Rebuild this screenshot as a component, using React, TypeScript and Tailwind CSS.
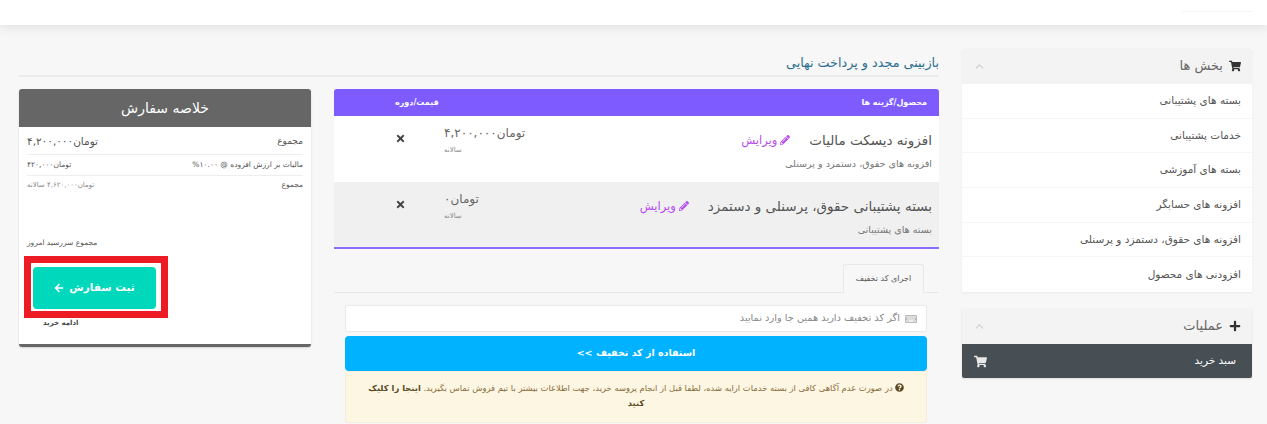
import { ChevronUp } from "lucide-react";
import {
  FaArrowLeft,
  FaKeyboard,
  FaPencilAlt,
  FaPlus,
  FaQuestionCircle,
  FaShoppingCart,
  FaTimes,
} from "react-icons/fa";

const menuItems = [
  "بسته های پشتیبانی",
  "خدمات پشتیبانی",
  "بسته های آموزشی",
  "افزونه های حسابگر",
  "افزونه های حقوق، دستمزد و پرسنلی",
  "افزودنی های محصول",
];

const cartRows = [
  {
    name: "افزونه دیسکت مالیات",
    group: "افزونه های حقوق، دستمزد و پرسنلی",
    price: "تومان۴,۲۰۰,۰۰۰",
    bg: "bg-white",
  },
  {
    name: "بسته پشتیبانی حقوق، پرسنلی و دستمزد",
    group: "بسته های پشتیبانی",
    price: "تومان۰",
    bg: "bg-[#f0f0f0]",
  },
];

function PanelHeading({ icon, title }: { icon: React.ReactNode; title: string }) {
  return (
    <div className="flex h-[36px] items-center justify-between rounded-t-[3px] bg-[#f3f3f3] pl-[11px] pr-[11px]">
      <div className="flex items-center gap-[6px] text-[13px] text-[#666]">
        <span className="text-[12px] text-[#333]">{icon}</span>
        <span>{title}</span>
      </div>
      <ChevronUp size={13} className="text-[#ccc]" />
    </div>
  );
}

function Sidebar() {
  return (
    <aside className="ml-[23px] w-[290px] shrink-0 pt-[23px]">
      <div className="bg-white shadow-[0_1px_2px_rgba(0,0,0,0.06)]">
        <PanelHeading icon={<FaShoppingCart />} title="بخش ها" />
        {menuItems.map((item) => (
          <div
            key={item}
            className="flex h-[34.7px] items-center border-b border-[#f5f5f5] px-[11px] text-[10.5px] text-[#555] last:border-b-0"
          >
            {item}
          </div>
        ))}
      </div>
      <div className="mt-[16px] shadow-[0_1px_2px_rgba(0,0,0,0.1)]">
        <PanelHeading icon={<FaPlus />} title="عملیات" />
        <div className="flex h-[34px] items-center justify-between rounded-b-[2px] bg-[#474f54] pl-[12px] pr-[16px] text-[10.5px] text-white">
          <span>سبد خرید</span>
          <FaShoppingCart size={13} className="text-[#e8e8e8]" />
        </div>
      </div>
    </aside>
  );
}

function OrderSummary() {
  return (
    <div className="h-[258px] w-[292px] shrink-0 self-start rounded-[3px] border-b-[3px] border-[#666] bg-white shadow-[0_1px_2px_rgba(0,0,0,0.15)]">
      <div className="flex h-[38px] items-center justify-center rounded-t-[3px] bg-[#666] text-[14px] text-white">
        خلاصه سفارش
      </div>
      <div className="px-[8px] text-[#555]">
        <div className="flex h-[28px] items-center justify-between border-b border-[#eee] pt-[2px] text-[9px]">
          <span>مجموع</span>
          <span className="text-[10.5px]">تومان۴,۲۰۰,۰۰۰</span>
        </div>
        <div className="flex h-[21px] items-center justify-between border-b border-[#eee] text-[7.5px]">
          <span>مالیات بر ارزش افزوده @ ۱۰.۰۰%</span>
          <span>تومان۴۲۰,۰۰۰</span>
        </div>
        <div className="flex h-[18px] items-center justify-between text-[7.5px]">
          <span>مجموع</span>
          <span className="text-[7px] text-[#888]">تومان۴,۶۲۰,۰۰۰ سالانه</span>
        </div>
        <div dir="ltr" className="mt-[43px] text-left text-[7.5px] leading-[12px]">
          <span dir="rtl">مجموع سررسید امروز</span>
        </div>
      </div>
      <div className="ml-[5px] mr-auto mt-[7px] w-[144px] border-[7px] border-[#ed1c24]">
        <div className="bg-white pb-[2px] pl-[2px] pr-[5px] pt-[4px]">
          <button className="flex h-[42px] w-full items-center justify-center gap-[5px] rounded-[4px] bg-[#00d8bb] text-[10.5px] font-bold text-white">
            <span>ثبت سفارش</span>
            <FaArrowLeft size={10} />
          </button>
        </div>
      </div>
      <div dir="ltr" className="ml-[24px] mt-[-1px] text-[7px] font-bold leading-[12px] text-[#444]">
        <span dir="rtl">ادامه خرید</span>
      </div>
    </div>
  );
}

function CartTable() {
  return (
    <div>
      <div className="flex h-[27px] items-center justify-between rounded-t-[3px] bg-[#7d5bff] px-[12px] text-[8px] font-bold text-white">
        <span>محصول/گزینه ها</span>
        <span className="ml-[49px]">قیمت/دوره</span>
      </div>
      <div className="border-b-2 border-[#8b6cff]">
        {cartRows.map((row) => (
          <div key={row.name} className={`flex h-[65.5px] items-start ${row.bg}`}>
            <div className="flex-1 pr-[7px] pt-[14px]">
              <div className="flex items-center gap-[19px] text-[13.5px] leading-[20px] text-[#555]">
                <span>{row.name}</span>
                <span className="flex items-center gap-[3px] text-[11.5px] text-[#b44cf0]">
                  <FaPencilAlt size={10} />
                  ویرایش
                </span>
              </div>
              <div className="mt-[8px] text-[9.6px] leading-[12px] text-[#777]">{row.group}</div>
            </div>
            <div className="flex w-[90px] shrink-0 flex-col items-end pt-[8px]">
              <span className="text-[12px] leading-[18px] text-[#666]">{row.price}</span>
              <span className="mt-[3px] text-[7px] leading-[10px] text-[#888]">سالانه</span>
            </div>
            <div className="w-[110px] shrink-0 pr-[38px] pt-[17px]">
              <FaTimes size={11} className="text-[#444]" />
            </div>
          </div>
        ))}
      </div>
    </div>
  );
}

function PromoBox() {
  return (
    <div>
      <div className="mt-[15px] flex h-[29px] items-end border-b border-[#e9e9e9] pr-[15px]">
        <div className="mb-[-1px] flex h-[29px] w-[81px] items-center justify-center rounded-t-[3px] border border-b-0 border-[#e9e9e9] bg-[#f7f7f7] text-[8px] text-[#555]">
          اجرای کد تخفیف
        </div>
      </div>
      <div className="pl-[11px] pr-[12px] pt-[12px]">
        <div className="flex h-[27px] items-center gap-[5px] rounded-[2px] border border-[#eaeaea] bg-white px-[9px] text-[9.8px] text-[#888]">
          <FaKeyboard size={12} className="text-[#bbb]" />
          اگر کد تخفیف دارید همین جا وارد نمایید
        </div>
        <button className="mt-[4px] flex h-[35px] w-full items-center justify-center rounded-[4px] bg-[#00b2ff] text-[9.5px] font-bold text-white">
          استفاده از کد تخفیف &gt;&gt;
        </button>
        <div className="h-[52px] rounded-b-[3px] border border-[#f5eed8] bg-[#fcf6e3] px-[16px] pt-[9px] text-center text-[8.4px] leading-[15px] text-[#8a6d3b]">
          <FaQuestionCircle size={9} className="ml-[2px] inline align-[-1px] text-[#5c4a24]" />
          در صورت عدم آگاهی کافی از بسته خدمات ارایه شده، لطفا قبل از انجام پروسه خرید، جهت اطلاعات بیشتر با تیم فروش تماس بگیرید.{" "}
          <b className="text-[#5c4a24]">اینجا را کلیک</b>
          <br />
          <b className="text-[#5c4a24]">کنید</b>
        </div>
      </div>
    </div>
  );
}

export default function App() {
  return (
    <div
      dir="rtl"
      className="h-[424px] w-[1267px] overflow-hidden bg-[#f7f7f7] font-['DejaVu_Sans',sans-serif]"
    >
      <header className="flex h-[25px] items-start bg-white pr-[15px] pt-[11px] shadow-[0_3px_12px_rgba(0,0,0,0.09)]">
        <div className="h-px w-[70px] bg-[#f4f4f4]" />
      </header>
      <div className="flex pr-[15px]">
        <Sidebar />
        <main className="w-[920px] shrink-0">
          <div className="mt-[28px] flex h-[24px] items-center border-b-2 border-[#ebebeb] pb-[3px] text-[12.75px] text-[#2c6e8f]">
            بازبینی مجدد و پرداخت نهایی
          </div>
          <div className="mt-[12px] flex gap-[23px]">
            <div className="w-[605px] shrink-0">
              <CartTable />
              <PromoBox />
            </div>
            <OrderSummary />
          </div>
        </main>
      </div>
    </div>
  );
}
